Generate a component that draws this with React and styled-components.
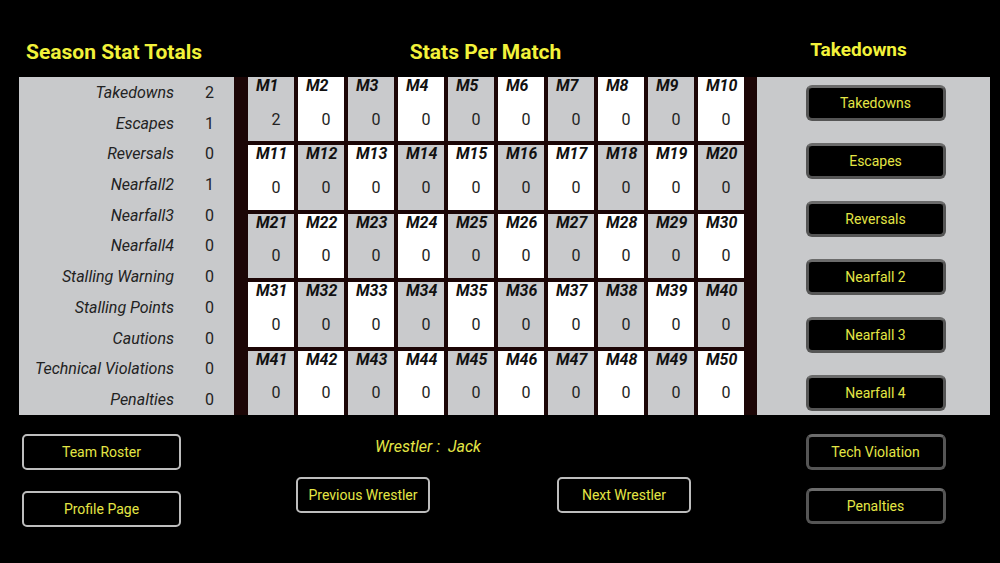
import React from 'react'
import styled, { createGlobalStyle } from 'styled-components'

const GlobalStyle = createGlobalStyle`
  html, body {
    margin: 0;
    padding: 0;
    background: #000;
  }
  body {
    font-family: Roboto, 'Liberation Sans', sans-serif;
  }
`

const totals = [
  ['Takedowns', 2],
  ['Escapes', 1],
  ['Reversals', 0],
  ['Nearfall2', 1],
  ['Nearfall3', 0],
  ['Nearfall4', 0],
  ['Stalling Warning', 0],
  ['Stalling Points', 0],
  ['Cautions', 0],
  ['Technical Violations', 0],
  ['Penalties', 0]
]

const matches = Array.from({ length: 50 }, (_, i) => ({
  name: `M${i + 1}`,
  value: i === 0 ? 2 : 0
}))

const statButtons = [
  'Takedowns',
  'Escapes',
  'Reversals',
  'Nearfall 2',
  'Nearfall 3',
  'Nearfall 4'
]

const Screen = styled.div`
  width: 1000px;
  height: 563px;
  background: #000;
  box-sizing: border-box;
  padding: 0 10px 0 19px;
  display: grid;
  grid-template-columns: 215px 523px 233px;
  grid-template-rows: 77px 338px 1fr;
  overflow: hidden;
`

const Title = styled.h2`
  margin: 0;
  align-self: end;
  font-size: ${({ size }) => size || 21}px;
  font-weight: 700;
  color: #f2f23a;
  text-align: ${({ align }) => align || 'left'};
  padding-left: ${({ indent }) => indent || 0}px;
  padding-right: ${({ outdent }) => outdent || 0}px;
  padding-bottom: ${({ lift }) => lift || 13}px;
  line-height: 24px;
`

const TotalsPanel = styled.div`
  background: #c8c9cb;
  display: grid;
  grid-template-columns: 155px 1fr;
  grid-auto-rows: 1fr;
  align-items: center;
`

const TotalLabel = styled.div`
  text-align: right;
  font-style: italic;
  font-size: 16px;
  color: #222;
`

const TotalValue = styled.div`
  padding-left: 31px;
  font-size: 16px;
  color: #222;
`

const MatchGrid = styled.div`
  background: #1c0606;
  padding: 0 13px 0 14px;
  display: grid;
  grid-template-columns: repeat(10, 1fr);
  grid-template-rows: repeat(5, 1fr);
  gap: 4px;
`

const MatchCell = styled.div`
  background: ${({ light }) => (light ? '#ffffff' : '#c9cacc')};
  display: flex;
  flex-direction: column;
  padding: 0 0 0 8px;
`

const MatchName = styled.div`
  font-size: 16px;
  font-weight: 700;
  font-style: italic;
  color: #111;
  line-height: 18px;
  padding-top: 0;
`

const MatchValue = styled.div`
  flex: 1;
  display: flex;
  align-items: center;
  justify-content: center;
  padding: 2px 0 0 2px;
  font-size: 16px;
  color: #222;
`

const ButtonPanel = styled.div`
  background: #c8c9cb;
  display: flex;
  flex-direction: column;
  align-items: center;
  padding: 8px 0 0 4px;
  gap: 22px;
`

const StatButton = styled.button`
  width: 140px;
  height: 36px;
  box-sizing: border-box;
  background: #000;
  border: 3px solid #555;
  border-top-color: #6b6b6b;
  border-radius: 6px;
  color: #e4e645;
  font-family: Roboto, 'Liberation Sans', sans-serif;
  font-size: 14px;
  padding: 0;
`

const NavButton = styled.button`
  width: ${({ wide }) => (wide ? 159 : 134)}px;
  height: 36px;
  box-sizing: border-box;
  background: #000;
  border: 2px solid #bdbdbd;
  border-radius: 5px;
  color: #e4e645;
  font-family: Roboto, 'Liberation Sans', sans-serif;
  font-size: 14px;
  padding: 0;
`

const LeftFooter = styled.div`
  display: flex;
  flex-direction: column;
  gap: 21px;
  padding: 19px 0 0 3px;
`

const MiddleFooter = styled.div`
  display: flex;
  flex-direction: column;
`

const WrestlerName = styled.div`
  padding: 21px 0 0 141px;
  font-style: italic;
  font-size: 16px;
  line-height: 22px;
  color: #e4e645;
  white-space: pre;
`

const FooterButtons = styled.div`
  display: flex;
  justify-content: center;
  gap: 127px;
  padding: 19px 4px 0 0;
`

const RightFooter = styled.div`
  display: flex;
  flex-direction: column;
  align-items: center;
  gap: 18px;
  padding: 19px 0 0 4px;
`

export default function App () {
  return (
    <>
      <GlobalStyle />
      <Screen>
        <Title indent={7}>Season Stat Totals</Title>
        <Title align='center' outdent={20}>Stats Per Match</Title>
        <Title align='center' size={19} outdent={30} lift={15}>Takedowns</Title>

        <TotalsPanel>
          {totals.map(([label, value]) => (
            <React.Fragment key={label}>
              <TotalLabel>{label}</TotalLabel>
              <TotalValue>{value}</TotalValue>
            </React.Fragment>
          ))}
        </TotalsPanel>

        <MatchGrid>
          {matches.map(({ name, value }, i) => {
            const row = Math.floor(i / 10)
            const col = i % 10
            return (
              <MatchCell key={name} light={(row + col) % 2 === 1}>
                <MatchName>{name}</MatchName>
                <MatchValue>{value}</MatchValue>
              </MatchCell>
            )
          })}
        </MatchGrid>

        <ButtonPanel>
          {statButtons.map(label => (
            <StatButton key={label}>{label}</StatButton>
          ))}
        </ButtonPanel>

        <LeftFooter>
          <NavButton wide>Team Roster</NavButton>
          <NavButton wide>Profile Page</NavButton>
        </LeftFooter>

        <MiddleFooter>
          <WrestlerName>{'Wrestler :  Jack'}</WrestlerName>
          <FooterButtons>
            <NavButton>Previous Wrestler</NavButton>
            <NavButton>Next Wrestler</NavButton>
          </FooterButtons>
        </MiddleFooter>

        <RightFooter>
          <StatButton>Tech Violation</StatButton>
          <StatButton>Penalties</StatButton>
        </RightFooter>
      </Screen>
    </>
  )
}
